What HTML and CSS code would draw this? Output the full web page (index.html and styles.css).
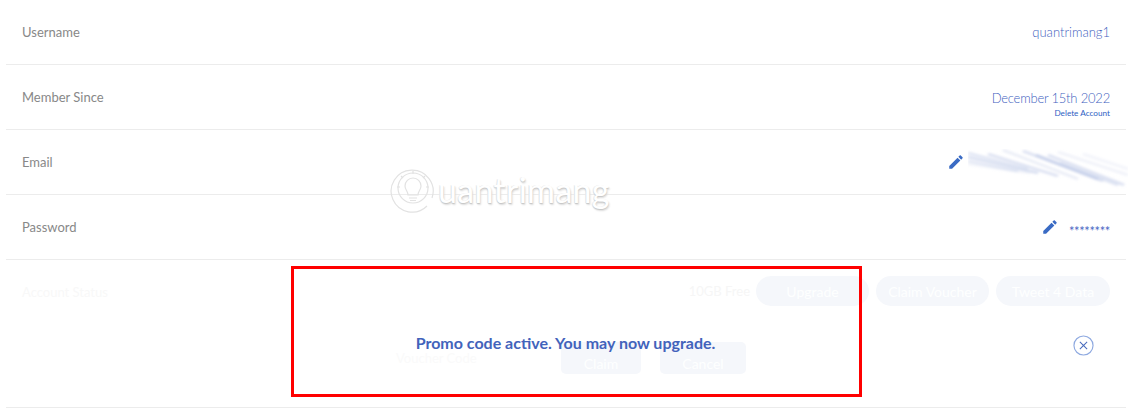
FILE: index.html
```html
<!DOCTYPE html>
<html lang="en">
<head>
    <meta charset="UTF-8">
    <meta name="viewport" content="width=device-width, initial-scale=1.0">
    <title>Account</title>
    <link rel="stylesheet" href="styles.css">
</head>
<body>
    <div class="account">
        <div class="row">
            <div class="label">Username</div>
            <div class="value">quantrimang1</div>
        </div>

        <div class="row">
            <div class="label">Member Since</div>
            <div class="since">
                <div class="value date">December 15th 2022</div>
                <div class="delete-link">Delete Account</div>
            </div>
        </div>

        <div class="row">
            <div class="label">Email</div>
            <div class="email-value">
                <svg class="pencil" viewBox="0 0 24 24"><path d="M3 17.25V21h3.75L17.81 9.94l-3.75-3.75L3 17.25zM20.71 7.04c.39-.39.39-1.02 0-1.41l-2.34-2.34c-.39-.39-1.02-.39-1.41 0l-1.83 1.83 3.75 3.75 1.83-1.83z"/></svg>
                <!-- blurred out address -->
                <svg class="email-blur" viewBox="0 0 160 42">
                    <defs>
                        <filter id="smear" x="-10%" y="-30%" width="120%" height="160%"><feGaussianBlur stdDeviation="1.8 1"/></filter>
                    </defs>
                    <g filter="url(#smear)" fill="none" stroke="#c3cee9" stroke-width="3">
                        <path d="M0 4L60 20" opacity="0.45"/>
                        <path d="M0 8L70 24" opacity="0.55"/>
                        <path d="M0 12L50 22" opacity="0.4"/>
                        <path d="M20 5L90 27" opacity="0.5"/>
                        <path d="M35 1L110 30" opacity="0.3"/>
                        <path d="M55 2L135 32" opacity="0.5"/>
                        <path d="M68 6L130 30" opacity="0.65"/>
                        <path d="M80 6L156 36" opacity="0.5"/>
                        <path d="M92 14L150 36" opacity="0.45"/>
                        <path d="M90 3L160 26" opacity="0.22"/>
                        <path d="M115 5L160 20" opacity="0.18"/>
                        <path d="M0 15L62 24" opacity="0.18"/>
                    </g>
                </svg>
            </div>
        </div>

        <div class="row">
            <div class="label">Password</div>
            <div class="password-value">
                <svg class="pencil" viewBox="0 0 24 24"><path d="M3 17.25V21h3.75L17.81 9.94l-3.75-3.75L3 17.25zM20.71 7.04c.39-.39.39-1.02 0-1.41l-2.34-2.34c-.39-.39-1.02-.39-1.41 0l-1.83 1.83 3.75 3.75 1.83-1.83z"/></svg>
                <span class="stars">********</span>
            </div>
        </div>

        <div class="status-row">
            <div class="status-top">
                <div class="label faded">Account Status</div>
                <div class="status-actions">
                    <span class="plan">10GB Free</span>
                    <button class="pill">Upgrade</button>
                    <button class="pill">Claim Voucher</button>
                    <button class="pill tweet">Tweet 4 Data</button>
                </div>
            </div>
            <div class="voucher">
                <div class="voucher-code">Voucher Code</div>
                <button class="voucher-btn claim">Claim</button>
                <button class="voucher-btn cancel">Cancel</button>
                <svg class="close-icon" viewBox="0 0 22 22">
                    <circle cx="11" cy="11" r="10" fill="none" stroke="#8ea9e0" stroke-width="1.2"/>
                    <path d="M7.2 7.2l7.6 7.6M14.8 7.2l-7.6 7.6" fill="none" stroke="#4a6cbd" stroke-width="1.1"/>
                </svg>
            </div>
        </div>
    </div>

    <!-- watermark sits over the rows -->
    <div class="watermark">
        <svg class="watermark-logo" viewBox="0 0 48 48">
            <g fill="none" stroke="#e2e2e2" stroke-width="1.2">
                <path d="M38 41 A21 21 0 1 1 43 33"/>
                <circle cx="24" cy="23" r="15"/>
                <path d="M19 30c0-4-3-5-3-9a8 8 0 0 1 16 0c0 4-3 5-3 9zM20 33h8M21 35.500h6"/>
                <path d="M24 6v3M12 11l2 2M36 11l-2 2M8 22h3M37 22h3"/>
            </g>
        </svg>
        <span class="watermark-text">uantrimang</span>
    </div>

    <div class="promo-box">
        <div class="promo-text">Promo code active. You may now upgrade.</div>
    </div>
</body>
</html>
```

FILE: styles.css
```css
body {
    margin: 0;
    background-color: white;
    font-family: "Lato", "Liberation Sans", sans-serif;
    font-size: 13px;
    color: #888888;
}

.account {
    width: 1120px;
    margin-left: 6px;
}

.row {
    display: flex;
    justify-content: space-between;
    align-items: center;
    height: 64px;
    padding: 0 16px;
    border-bottom: 1px solid #ececec;
}

.value {
    color: #3f5fc0;
    font-weight: 300;
}

.date {
    letter-spacing: -0.2px;
}

.since {
    display: flex;
    flex-direction: column;
    align-items: flex-end;
    margin-top: 13px;
}

.delete-link {
    margin-top: 2px;
    font-size: 8.2px;
    color: #2f5fc4;
}

.email-value {
    display: flex;
    align-items: center;
    margin-right: -18px;
}

.email-blur {
    width: 160px;
    height: 42px;
    margin-left: 3px;
    margin-top: 15px;
}

.pencil {
    width: 18px;
    height: 18px;
    fill: #3a6bc4;
}

.password-value {
    display: flex;
    align-items: center;
}

.stars {
    margin-left: 10px;
    margin-top: 7px;
    font-size: 13px;
    line-height: 12px;
    letter-spacing: -0.4px;
    color: #4a68c4;
}

/* status row is faded behind the message */
.status-row {
    height: 147px;
    padding: 0 16px;
    border-bottom: 1px solid #ececec;
}

.status-top {
    display: flex;
    justify-content: space-between;
    align-items: center;
    padding-top: 16px;
}

.faded {
    margin-top: 2px;
    color: #f8f8f8;
}

.status-actions {
    display: flex;
    align-items: center;
    gap: 7px;
}

.plan {
    margin-right: -1px;
    color: #f6f6f6;
}

.pill {
    width: 113px;
    height: 30px;
    padding: 0;
    border: none;
    border-radius: 15px;
    background-color: #f5f7fb;
    color: #feffff;
    font-family: inherit;
    font-size: 14px;
}

.tweet {
    width: 114px;
}

.voucher {
    display: flex;
    align-items: center;
    margin-top: 36px;
    padding-left: 374px;
}

.voucher-code {
    width: 165px;
    line-height: 14px;
    color: #fafafa;
}

.voucher-btn {
    height: 32px;
    padding: 12px 0 0;
    border: none;
    border-radius: 5px;
    background-color: #f5f7fb;
    color: #feffff;
    font-family: inherit;
    font-size: 14px;
    line-height: 14px;
}

.claim {
    width: 80px;
    margin-right: 19px;
}

.cancel {
    width: 86px;
}

.close-icon {
    width: 21px;
    height: 21px;
    margin-left: auto;
    margin-right: 16px;
    margin-top: -26px;
}

.watermark {
    position: absolute;
    left: 389px;
    top: 165px;
    display: flex;
    align-items: flex-start;
}

.watermark-logo {
    width: 48px;
    height: 48px;
}

.watermark-text {
    margin-left: 1px;
    margin-top: 4px;
    font-size: 34px;
    letter-spacing: 0.3px;
    color: #ffffff;
    text-shadow: 0 1px 1px #c6c6c6, 1px 2px 2px #dedede, -1px 0 0 #efefef;
}

.promo-box {
    position: absolute;
    left: 291px;
    top: 266px;
    display: flex;
    justify-content: center;
    width: 565px;
    height: 125px;
    border: 3px solid #ff0000;
}

.promo-text {
    margin-top: 66px;
    margin-right: 22px;
    font-size: 16px;
    line-height: 16px;
    height: 16px;
    font-weight: 700;
    color: #4263bb;
}
```
